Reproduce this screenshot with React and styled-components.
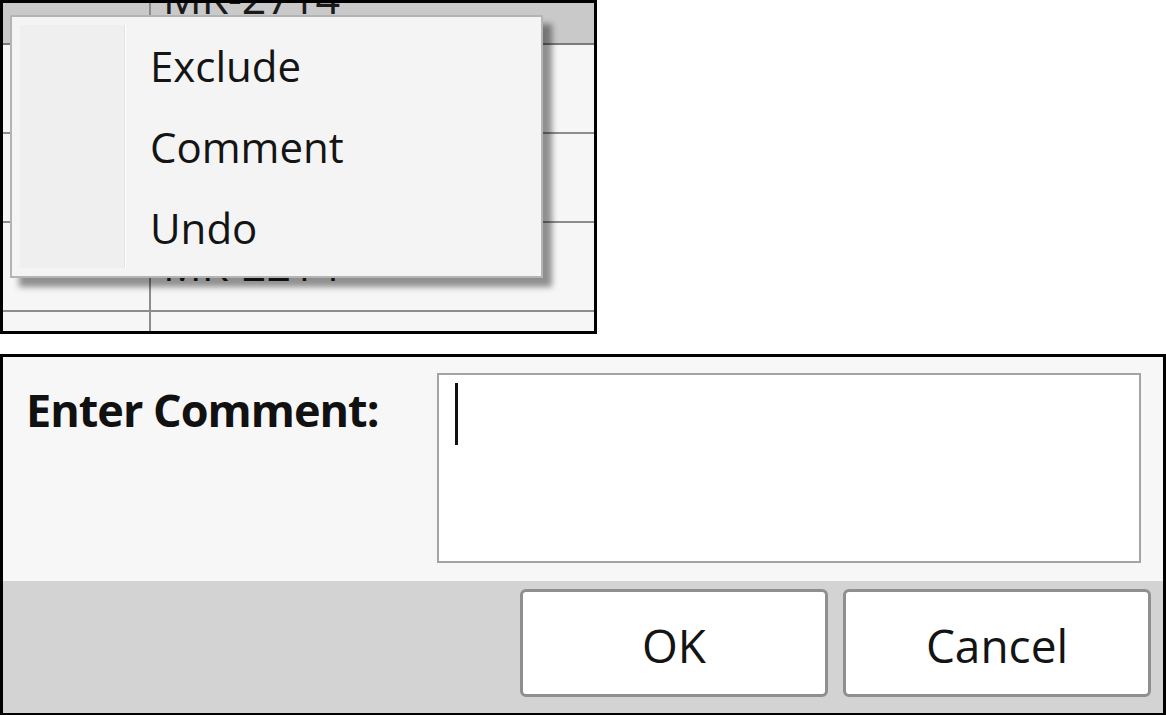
import React from 'react';
import styled, { createGlobalStyle } from 'styled-components';

const GlobalStyle = createGlobalStyle`
  html, body {
    margin: 0;
    padding: 0;
    background: #ffffff;
  }
  body {
    font-family: "Open Sans", "Noto Sans", "Liberation Sans", sans-serif;
    color: #111;
  }
`;

const Page = styled.div`
  display: flex;
  flex-direction: column;
  align-items: flex-start;
  gap: 20px;
  width: 1166px;
`;

/* ---------- top shot: grid with context menu ---------- */

const Shot = styled.div`
  position: relative;
  box-sizing: border-box;
  width: ${p => p.w}px;
  height: ${p => p.h}px;
  border: 3px solid #000;
  overflow: hidden;
`;

const Table = styled.div`
  display: flex;
  flex-direction: column;
  margin-top: -47px;
`;

const Row = styled.div`
  display: grid;
  grid-template-columns: 146px 1fr;
  height: 89px;
  box-sizing: border-box;
  border-bottom: 2px solid ${p => (p.selected ? '#7a7a7a' : '#8c8c8c')};
  background: ${p => (p.selected ? '#c9c9c9' : '#f6f6f6')};
`;

const Cell = styled.div`
  display: flex;
  align-items: center;
  padding: 0 0 4px 12px;
  font-size: 43px;
  color: #1a1a1a;
  border-left: ${p => (p.first ? 'none' : '2px solid #8c8c8c')};
`;

const Menu = styled.div`
  position: absolute;
  left: 7px;
  top: 12px;
  width: 533px;
  height: 263px;
  box-sizing: border-box;
  border: 2px solid #b4b4b4;
  background: #f4f4f4;
  box-shadow: 9px 9px 6px rgba(0, 0, 0, 0.42);
  display: grid;
  grid-template-columns: 105px 1fr;
  padding: 8px 0 8px 8px;
`;

const Gutter = styled.div`
  background: #efefef;
  border-right: 1px solid #e2e2e2;
  box-shadow: 1px 0 0 #ffffff;
`;

const Items = styled.div`
  display: flex;
  flex-direction: column;
`;

const Item = styled.div`
  height: 81px;
  display: flex;
  align-items: center;
  padding-left: 25px;
  font-size: 42px;
  color: #141414;
`;

/* ---------- bottom shot: comment dialog ---------- */

const Dialog = styled.div`
  box-sizing: border-box;
  width: 1166px;
  height: 362px;
  border: 3px solid #000;
  display: flex;
  flex-direction: column;
`;

const Body = styled.div`
  height: 224px;
  box-sizing: border-box;
  background: #f7f7f7;
  display: flex;
  align-items: flex-start;
  padding: 16px 22px 0 23px;
`;

const Label = styled.div`
  width: 411px;
  padding-top: 5px;
  font-size: 45px;
  font-weight: 700;
  letter-spacing: -1px;
  color: #111;
  line-height: 64px;
`;

const TextBox = styled.div`
  flex: 1;
  height: 190px;
  box-sizing: border-box;
  background: #ffffff;
  border: 2px solid #a4a4a4;
  padding: 8px 0 0 16px;
`;

const Caret = styled.div`
  width: 3px;
  height: 62px;
  background: #111;
`;

const Footer = styled.div`
  flex: 1;
  background: #d3d3d3;
  display: flex;
  justify-content: flex-end;
  align-items: flex-start;
  gap: 15px;
  padding: 8px 12px 0 0;
`;

const Button = styled.div`
  width: 308px;
  height: 108px;
  box-sizing: border-box;
  background: #ffffff;
  border: 3px solid #8f8f8f;
  border-radius: 6px;
  display: flex;
  align-items: center;
  justify-content: center;
  font-size: 46px;
  color: #141414;
  padding-top: 4px;
`;

export default function App() {
  const rows = ['MK-2714', '', '', 'MK-2214', ''];
  return (
    <>
      <GlobalStyle />
      <Page>
        <Shot w={597} h={334}>
          <Table>
            {rows.map((r, i) => (
              <Row key={i} selected={i === 0}>
                <Cell first />
                <Cell>{r}</Cell>
              </Row>
            ))}
          </Table>
          <Menu>
            <Gutter />
            <Items>
              <Item>Exclude</Item>
              <Item>Comment</Item>
              <Item>Undo</Item>
            </Items>
          </Menu>
        </Shot>

        <Dialog>
          <Body>
            <Label>Enter Comment:</Label>
            <TextBox>
              <Caret />
            </TextBox>
          </Body>
          <Footer>
            <Button>OK</Button>
            <Button>Cancel</Button>
          </Footer>
        </Dialog>
      </Page>
    </>
  );
}
